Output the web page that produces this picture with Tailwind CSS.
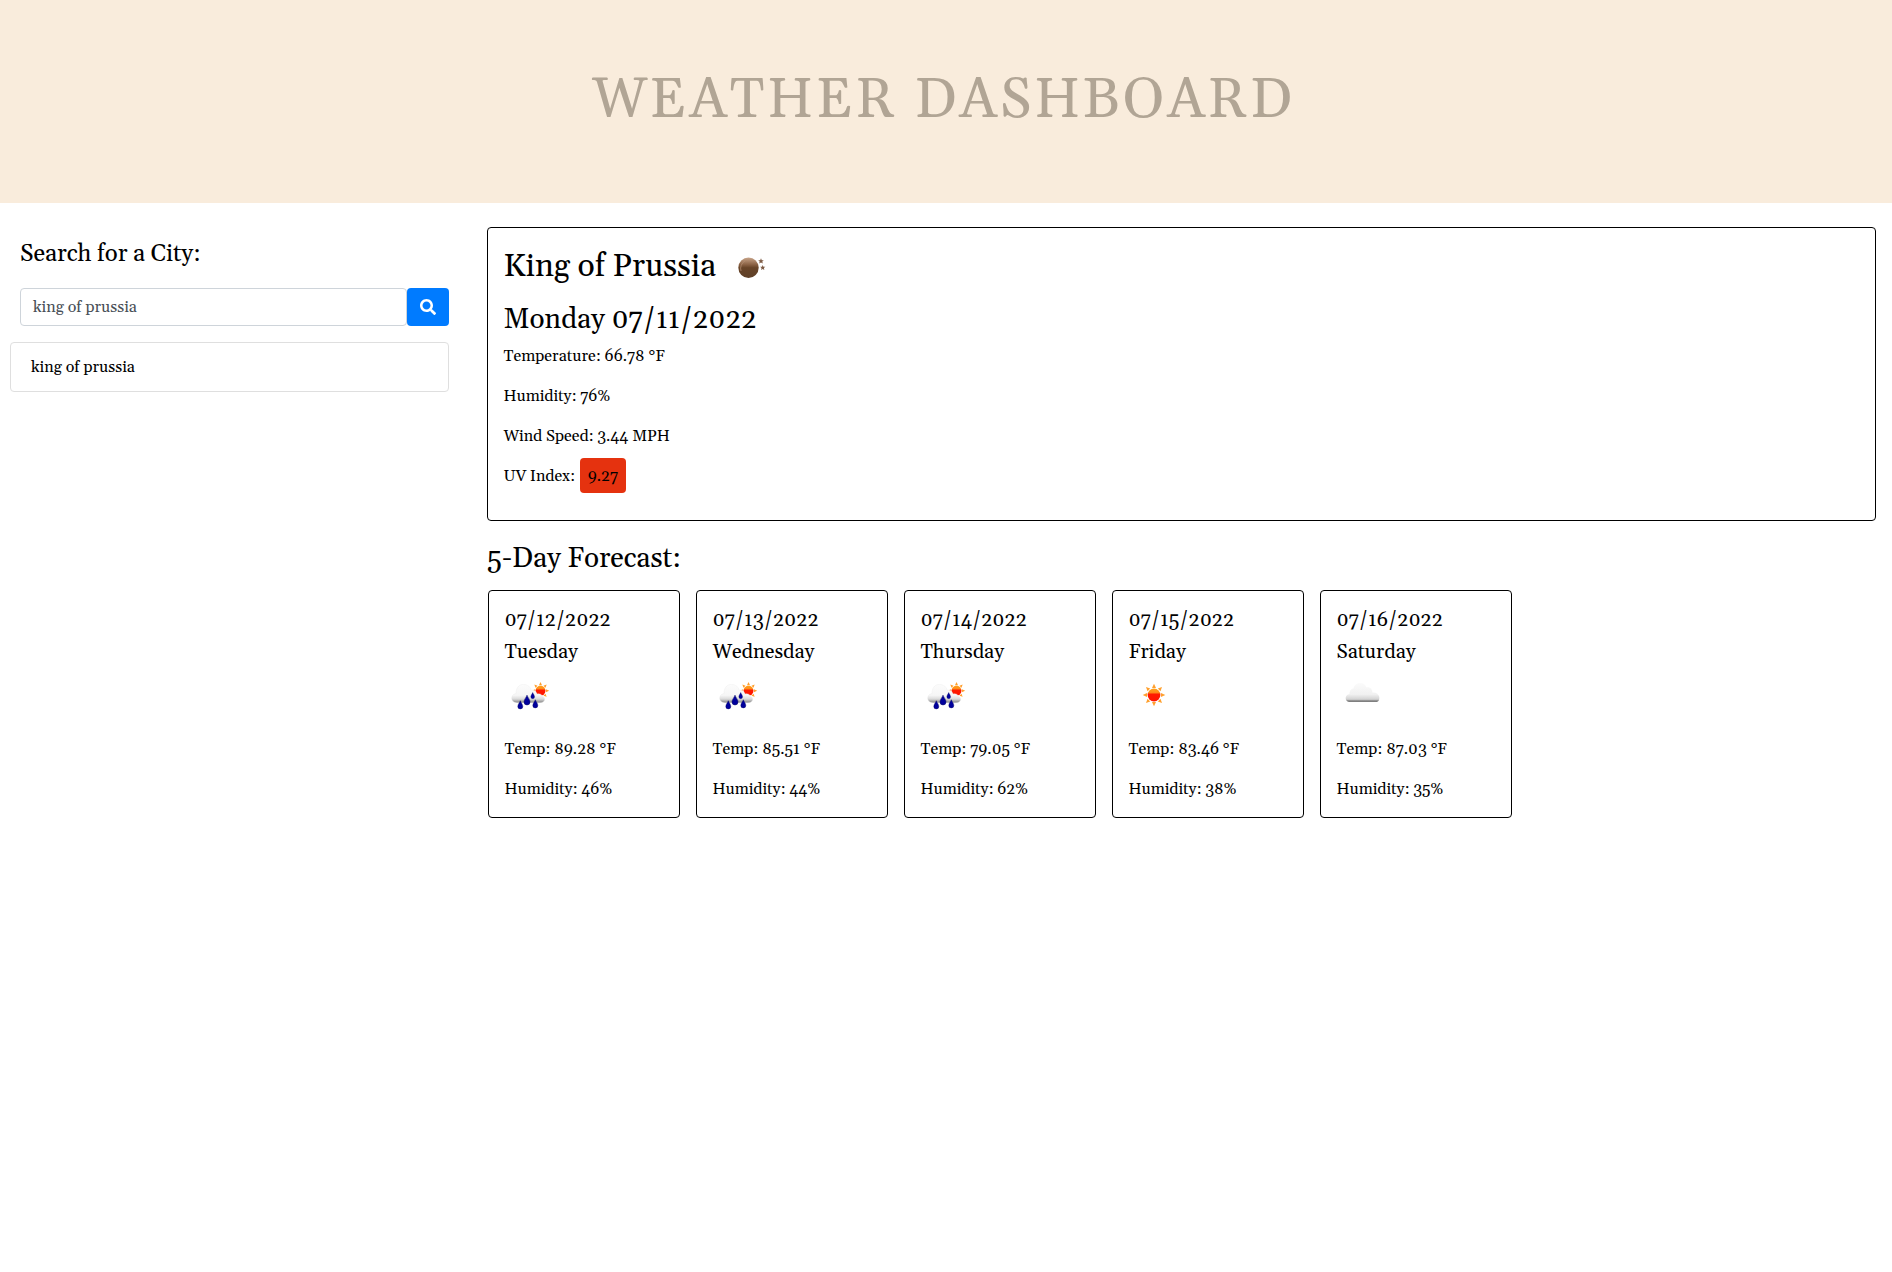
<!DOCTYPE html>
<html lang="en">
<head>
<meta charset="utf-8">
<title>Weather Dashboard</title>
<script src="https://cdn.jsdelivr.net/npm/@tailwindcss/browser@4"></script>
</head>
<body class="bg-white text-black font-[Gelasio,Georgia,'Liberation_Serif',serif] text-base leading-6">
<svg width="0" height="0" class="absolute">
  <defs>
    <linearGradient id="cloudFill" x1="0" y1="0" x2="0" y2="1"><stop offset="0" stop-color="#fbfbfb"/><stop offset=".6" stop-color="#f1f1f1"/><stop offset=".86" stop-color="#d2d2d2"/><stop offset=".93" stop-color="#8c8c8c"/><stop offset="1" stop-color="#777"/></linearGradient>
    <linearGradient id="rainFill" x1="0" y1="0" x2="0" y2="1"><stop offset="0" stop-color="#fcfcfc"/><stop offset=".6" stop-color="#f6f6f6"/><stop offset=".8" stop-color="#dadada"/><stop offset="1" stop-color="#858585"/></linearGradient>
    <linearGradient id="sunFill" x1="0" y1="0" x2="0" y2="1"><stop offset="0" stop-color="#ffa21a"/><stop offset=".3" stop-color="#ff8c1a"/><stop offset=".45" stop-color="#ff1a00"/><stop offset="1" stop-color="#ff1500"/></linearGradient>
    <linearGradient id="moonFill" x1="0" y1="0" x2="0" y2="1"><stop offset="0" stop-color="#c9a58a"/><stop offset=".35" stop-color="#8a6144"/><stop offset=".5" stop-color="#684428"/><stop offset="1" stop-color="#5f4028"/></linearGradient>
    <g id="sun">
      <path fill="#ffa02e" d="M0-11.3 2-7H-2ZM0 11.3 2 7H-2ZM-11.3 0-7 2V-2ZM11.3 0 7 2V-2ZM-8-8-3.800-6.500-6.500-3.800ZM8-8 3.800-6.500 6.500-3.800ZM-8 8-3.800 6.500-6.500 3.800ZM8 8 3.800 6.500 6.500 3.800Z"/>
      <circle r="6.400" fill="url(#sunFill)"/>
    </g>
    <path id="drop" fill="#00009c" stroke="#000060" stroke-width=".4" d="M0-4.300C.6-2.400 2.500-.6 2.500 1.400A2.500 2.500 0 0 1-2.500 1.400C-2.500-.6-.6-2.400 0-4.300Z"/>
  </defs>
</svg>
<header class="h-[203px] bg-[#f9ecdc] flex justify-center pt-[68px] pr-[5px]">
  <h1 class="text-[56px] leading-[66px] tracking-[3px] text-[#b1a595] whitespace-nowrap">WEATHER DASHBOARD</h1>
</header>
<main class="flex">
  <aside class="w-[487px] shrink-0 pl-2.5 pt-[37px]">
    <h3 class="ml-2.5 text-2xl leading-[29px] tracking-[-0.085px]">Search for a City:</h3>
    <form class="ml-2.5 mt-[19px] w-[429px] h-[38px] flex">
      <div class="flex-1 border border-[#ced4da] rounded-l rounded-r-sm px-3 py-1.5 text-[#495057]">king of prussia</div>
      <button type="button" aria-label="Search" class="w-[42px] rounded bg-[#007bff] flex items-center justify-center pr-px pb-px">
        <svg class="size-4" viewBox="0 0 512 512" fill="#fff"><path d="M505 442.700 405.300 343c-4.500-4.500-10.600-7-17-7H372c27.600-35.300 44-79.700 44-128C416 93.100 322.900 0 208 0S0 93.100 0 208s93.100 208 208 208c48.300 0 92.700-16.400 128-44v16.300c0 6.400 2.500 12.500 7 17l99.700 99.700c9.400 9.400 24.600 9.400 33.900 0l28.300-28.300c9.400-9.400 9.400-24.600.1-34zM208 336c-70.700 0-128-57.200-128-128 0-70.700 57.200-128 128-128 70.700 0 128 57.200 128 128 0 70.700-57.200 128-128 128z"/></svg>
      </button>
    </form>
    <ul class="mt-4 w-[439px] h-[50px] border border-[#dfdfdf] rounded pl-5 pt-3"><li>king of prussia</li></ul>
  </aside>
  <section class="w-[1389px] pt-6">
    <article class="h-[294px] border border-black rounded pl-[15.500px] pr-4 pt-5">
      <h2 class="text-[32px] leading-[38px] tracking-[-0.100px] flex whitespace-nowrap">King of Prussia
        <svg class="size-[50px] ml-2 -mt-[5px] -mb-[7px]" viewBox="0 0 50 50"><circle cx="24.500" cy="24.700" r="10.200" fill="url(#moonFill)"/><path d="M17 28a8.500 8.500 0 0 1 4-10" fill="none" stroke="#b08a6e" stroke-width=".8"/><path fill="#7d5a44" d="m37 15.300.8 1.900 2 .1-1.500 1.300.5 2-1.800-1.100-1.800 1.100.5-2-1.500-1.300 2-.1zM38.700 22l.7 1.700 1.900.1-1.400 1.200.4 1.900-1.600-1-1.600 1 .4-1.900-1.400-1.200 1.900-.1z"/></svg>
      </h2>
      <h3 class="mt-[17px] mb-[7px] text-[28px] leading-[34px] tracking-[-0.050px]">Monday 07/11/2022</h3>
      <p class="mb-4">Temperature: 66.78 °F</p>
      <p class="mb-4 tracking-[-0.050px]">Humidity: 76%</p>
      <p class="mb-4 tracking-[-0.050px]">Wind Speed: 3.44 MPH</p>
      <p class="flex items-center gap-[5px]"><span class="tracking-[-0.100px]">UV Index:</span><span class="-mb-2 -mt-[10px] w-[46px] h-[35px] rounded bg-[#e5320f] flex items-center justify-center pt-0.5">9.27</span></p>
    </article>
    <h3 class="mt-[21px] text-[28px] leading-[34px] tracking-[-0.100px]">5-Day Forecast:</h3>
    <div id="days" class="ml-px mt-3.5 flex gap-4"></div>
  </section>
</main>
<script>
const icons = {
  rain: '<g transform="translate(35.500 20.700) scale(.77)"><use href="#sun"/></g><path d="M12 32.700C4.500 32.500 5.500 24 11 23.500 11 16 16 14 19 14.500 23 14.500 25.500 17 26 20 29.500 19.500 31.500 21.500 32 24 34.500 23 37 24.500 37.500 26.500 40.500 27 41 32.500 35 32.700Z" fill="url(#rainFill)" stroke="#e6e6e6" stroke-width=".3"/><use href="#drop" x="15.300" y="35"/><g transform="translate(22 30.300) scale(1.200)"><use href="#drop"/></g><g transform="translate(27.700 25.700) scale(.75)"><use href="#drop"/></g><use href="#drop" x="30.300" y="34"/>',
  sun: '<use href="#sun" x="25" y="25"/>',
  cloud: '<path d="M12 32C7.500 31 7.500 25 12.500 24 12.500 20 15 18.500 16.500 18.500 18 12 27 11 29.500 17.500 33 16.500 35.500 19.500 35.300 22.500 43.500 22 44 30.500 40 32Z" fill="url(#cloudFill)"/>'
};
const days = [
  ['07/12/2022', 'Tuesday', 'rain', '89.28', '46'],
  ['07/13/2022', 'Wednesday', 'rain', '85.51', '44'],
  ['07/14/2022', 'Thursday', 'rain', '79.05', '62'],
  ['07/15/2022', 'Friday', 'sun', '83.46', '38'],
  ['07/16/2022', 'Saturday', 'cloud', '87.03', '35']
];
document.getElementById('days').innerHTML = days.map(([date, day, icon, temp, humidity]) => `
  <article class="w-48 h-[228px] border border-black rounded pl-[15.500px] pr-4 pt-[13px]">
    <h5 class="text-xl leading-8 tracking-[-0.040px]">${date}<br>${day}</h5>
    <svg class="size-[50px] mt-0.5" viewBox="0 0 50 50">${icons[icon]}</svg>
    <p class="mt-[17px]">Temp: ${temp} °F</p>
    <p class="mt-4 tracking-[-0.050px]">Humidity: ${humidity}%</p>
  </article>`).join('');
</script>
</body>
</html>
